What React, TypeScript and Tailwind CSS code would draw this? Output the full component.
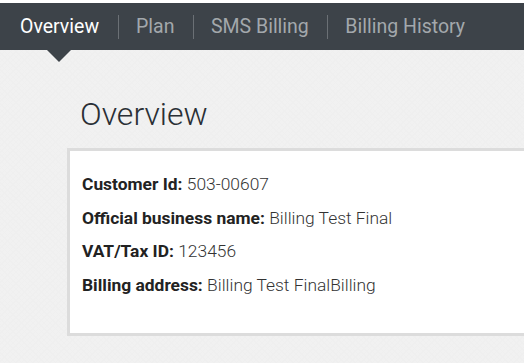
export default function App() {
  const tabs = ["Overview", "Plan", "SMS Billing", "Billing History"];
  const rows = [
    { label: "Customer Id:", value: "503-00607" },
    { label: "Official business name:", value: "Billing Test Final" },
    { label: "VAT/Tax ID:", value: "123456" },
    { label: "Billing address:", value: "Billing Test FinalBilling" },
  ];

  return (
    <div
      className="w-[524px] h-[363px] overflow-hidden pt-[3px] bg-white"
      style={{ fontFamily: "Roboto, 'Liberation Sans', sans-serif" }}
    >
      <div className="h-[360px] bg-[#f1f1f1] bg-[repeating-linear-gradient(45deg,#f3f3f3_0px,#f3f3f3_3px,#efefef_3px,#efefef_4px),repeating-linear-gradient(-45deg,#f3f3f3_0px,#f3f3f3_3px,#efefef_3px,#efefef_4px)] bg-blend-darken">
        {/* Tabs */}
        <nav className="h-[47px] bg-[#3d4349] flex items-center pl-[20px]">
          {tabs.map((t, i) => (
            <div key={t} className="flex items-center h-full">
              {i > 0 && <span className="w-px h-[24px] bg-[#6b7075]" />}
              <div
                className={
                  "relative h-full flex items-center text-[19.5px] " +
                  (i === 0 ? "text-white pr-[19px]" : "text-[#a3a8ac] pl-[17px] pr-[18.5px]")
                }
              >
                {t}
                {i === 0 && (
                  <span className="absolute left-[27px] top-[47px] w-0 h-0 border-l-[12px] border-r-[12px] border-t-[12px] border-l-transparent border-r-transparent border-t-[#3d4349]" />
                )}
              </div>
            </div>
          ))}
        </nav>

        <div className="pl-[67px]">
          <h1 className="pl-[13px] pt-[44px] text-[32px] font-light text-[#2a2f35] leading-[40px]">
            Overview
          </h1>
          <div className="mt-[14px] h-[188px] bg-white border-[3px] border-r-0 border-[#dcdcdc] pl-[12px] pt-[22px]">
            {rows.map((r) => (
              <div key={r.label} className="h-[33.7px] text-[17.4px] leading-[22px] text-[#222]">
                <span className="font-bold">{r.label}</span>{" "}
                <span className="font-light text-[#333]">{r.value}</span>
              </div>
            ))}
          </div>
        </div>
      </div>
    </div>
  );
}
